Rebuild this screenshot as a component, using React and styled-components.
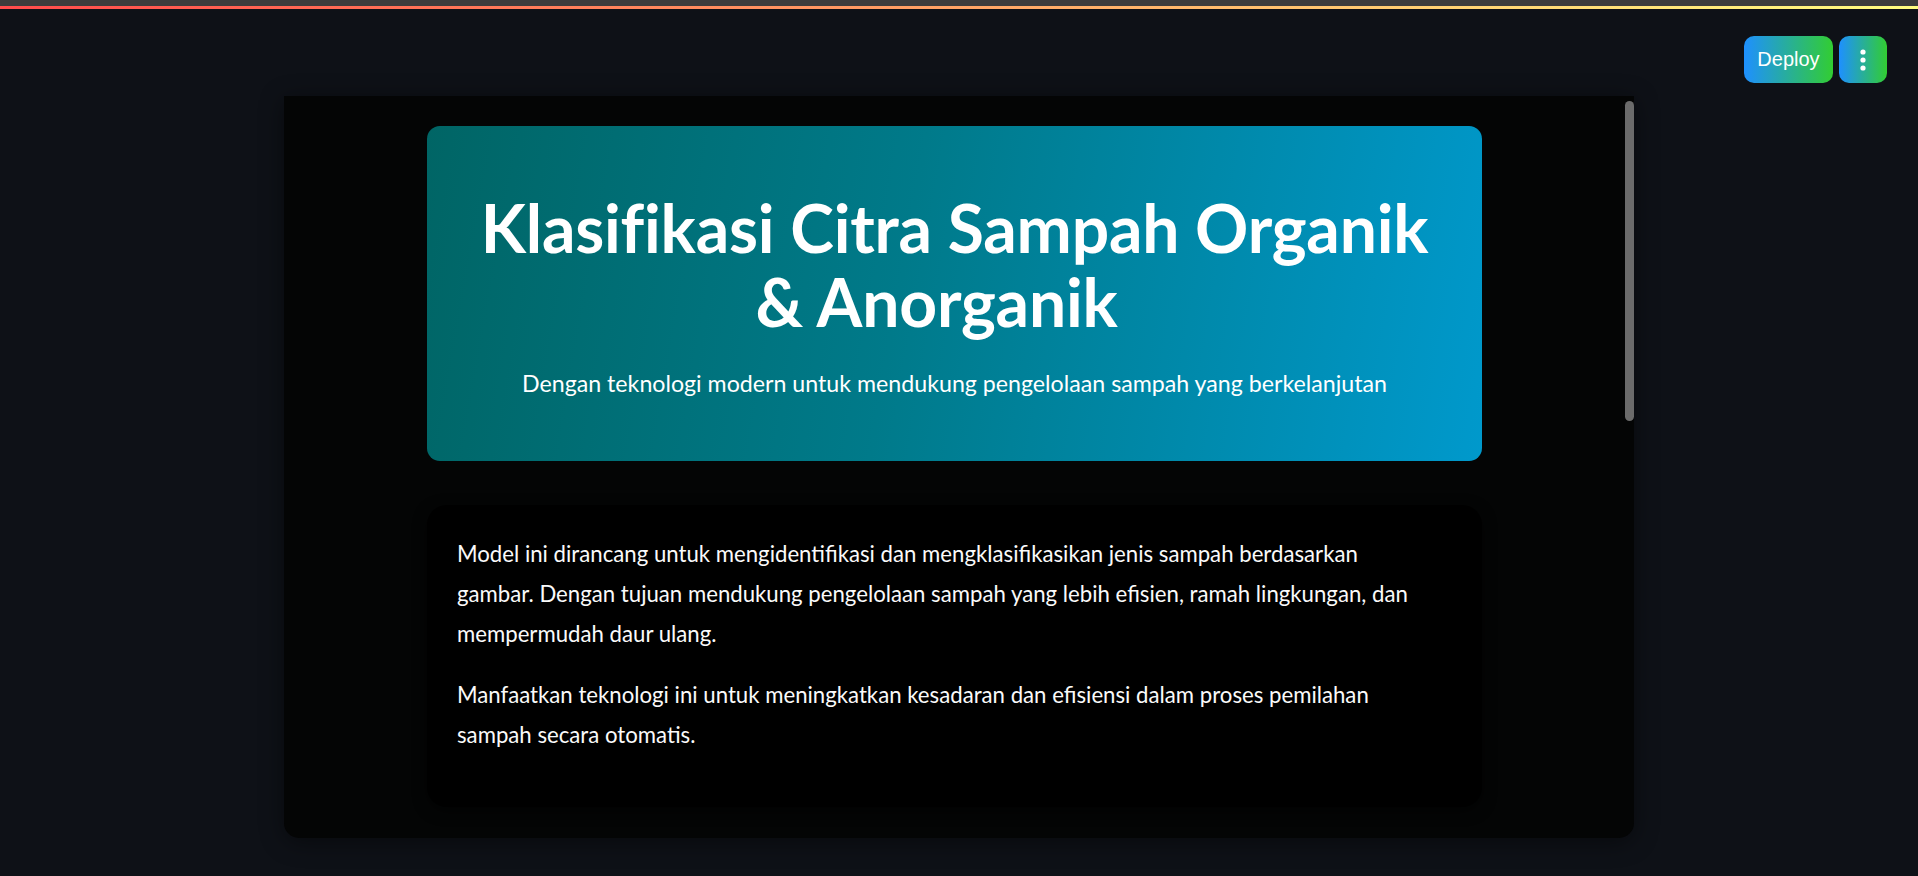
import React from "react";
import styled, { createGlobalStyle } from "styled-components";

const GlobalStyle = createGlobalStyle`
  html, body {
    margin: 0;
    padding: 0;
    background: #0e1117;
    height: 876px;
    overflow: hidden;
    font-family: Lato, "Noto Sans", sans-serif;
  }
`;

const TopStrip = styled.div`
  height: 6px;
  background: #3c3c3c;
`;

const Decoration = styled.div`
  height: 3px;
  background: linear-gradient(90deg, #ff4b4b, #fffd80);
`;

const Header = styled.header`
  height: 87px;
  box-sizing: border-box;
  display: flex;
  justify-content: flex-end;
  align-items: flex-start;
  gap: 6px;
  padding: 27px 31px 0 0;
  background: #0e1117;
`;

const HeaderButton = styled.button`
  height: 47px;
  width: ${(p) => p.$w}px;
  border: none;
  border-radius: 10px;
  background: linear-gradient(90deg, #1e90ff, #32cd32);
  color: #fff;
  font-family: "Liberation Sans", Arial, sans-serif;
  font-size: 20px;
  display: flex;
  align-items: center;
  justify-content: center;
  padding: 0;
`;

const Panel = styled.main`
  width: 1350px;
  height: 742px;
  margin: 0 auto;
  display: flex;
  background: #040505;
  border-radius: 0 0 15px 15px;
  box-shadow: 0 4px 24px rgba(0, 0, 0, 0.45);
  overflow: hidden;
`;

const Content = styled.div`
  flex: 1;
  display: flex;
  flex-direction: column;
  align-items: center;
  padding-top: 30px;
`;

const ScrollTrack = styled.div`
  width: 9px;
  padding-top: 5px;
`;

const ScrollThumb = styled.div`
  height: 320px;
  border-radius: 5px;
  background: #6b6b6b;
`;

const Banner = styled.section`
  width: 1055px;
  height: 335px;
  box-sizing: border-box;
  border-radius: 13px;
  background: linear-gradient(100deg, #006565 0%, #007a8a 45%, #0099cc 100%);
  color: #fff;
  text-align: center;
  padding-top: 65px;
`;

const Title = styled.h1`
  margin: 0;
  font-size: 66px;
  font-weight: 700;
  line-height: 74px;
  letter-spacing: -0.2px;
`;

const Anchor = styled.span`
  display: inline-block;
  width: 36px;
`;

const Subtitle = styled.p`
  margin: 28px 0 0;
  font-size: 23.2px;
  line-height: 32px;
`;

const InfoCard = styled.section`
  width: 1055px;
  height: 302px;
  box-sizing: border-box;
  margin-top: 44px;
  padding: 29px 30px;
  border-radius: 20px;
  background: #000;
  box-shadow: 0 4px 14px rgba(0, 0, 0, 0.6);
  color: #fafafa;
`;

const Paragraph = styled.p`
  margin: 0 0 21px;
  font-size: 22.2px;
  line-height: 40px;
  white-space: nowrap;
`;

function MenuDots() {
  return (
    <svg width="6" height="22" viewBox="0 0 6 22">
      <circle cx="3" cy="3" r="2.6" fill="#fff" />
      <circle cx="3" cy="11" r="2.6" fill="#fff" />
      <circle cx="3" cy="19" r="2.6" fill="#fff" />
    </svg>
  );
}

export default function App() {
  return (
    <>
      <GlobalStyle />
      <TopStrip />
      <Decoration />
      <Header>
        <HeaderButton $w={89}>Deploy</HeaderButton>
        <HeaderButton $w={48}>
          <MenuDots />
        </HeaderButton>
      </Header>

      <Panel>
        <Content>
          <Banner>
            <Title>
              Klasifikasi Citra Sampah Organik
              <br />& Anorganik
              <Anchor />
            </Title>
            <Subtitle>
              Dengan teknologi modern untuk mendukung pengelolaan sampah yang
              berkelanjutan
            </Subtitle>
          </Banner>

          <InfoCard>
            <Paragraph>
              Model ini dirancang untuk mengidentifikasi dan mengklasifikasikan
              jenis sampah berdasarkan
              <br />
              gambar. Dengan tujuan mendukung pengelolaan sampah yang lebih
              efisien, ramah lingkungan, dan
              <br />
              mempermudah daur ulang.
            </Paragraph>
            <Paragraph>
              Manfaatkan teknologi ini untuk meningkatkan kesadaran dan efisiensi
              dalam proses pemilahan
              <br />
              sampah secara otomatis.
            </Paragraph>
          </InfoCard>
        </Content>
        <ScrollTrack>
          <ScrollThumb />
        </ScrollTrack>
      </Panel>
    </>
  );
}
